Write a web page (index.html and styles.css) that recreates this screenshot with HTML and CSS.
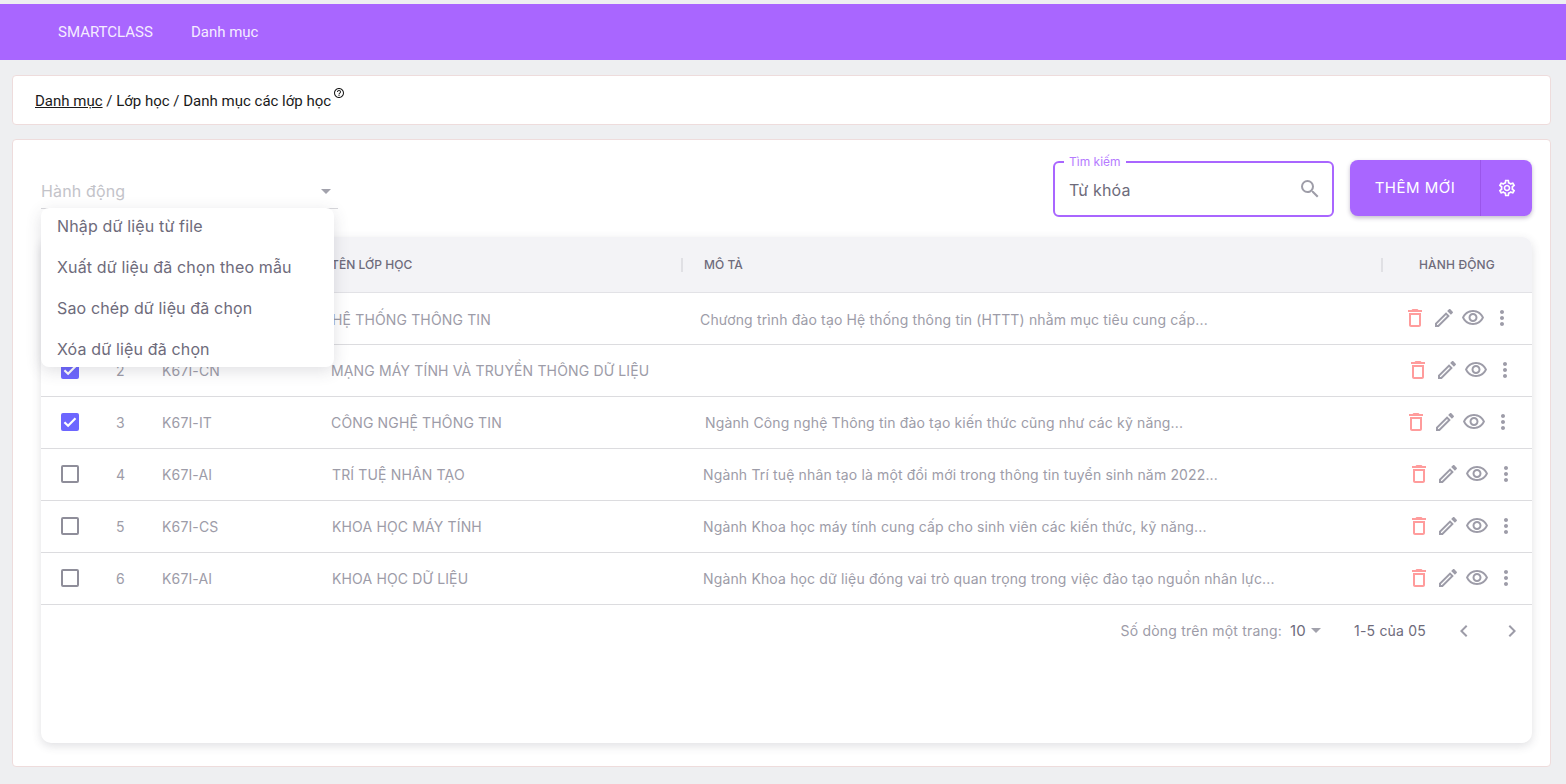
FILE: index.html
```html
<!DOCTYPE html>
<html lang="vi">
<head>
<meta charset="UTF-8" />
<meta name="viewport" content="width=device-width, initial-scale=1" />
<title>Danh mục các lớp học</title>
<link rel="stylesheet" href="styles.css">
</head>
<body>

<svg class="defs" width="0" height="0">
  <symbol id="i-search" viewBox="0 0 24 24"><path d="M15.5 14h-.79l-.28-.27A6.471 6.471 0 0 0 16 9.5 6.5 6.5 0 1 0 9.5 16c1.61 0 3.09-.59 4.23-1.57l.27.28v.79l5 4.99L20.49 19l-4.99-5zm-6 0C7.01 14 5 11.99 5 9.5S7.01 5 9.5 5 14 7.01 14 9.5 11.99 14 9.5 14z"/></symbol>
  <symbol id="i-trash" viewBox="0 0 24 24"><path d="M16 9v10H8V9h8m-1.5-6h-5l-1 1H5v2h14V4h-3.5l-1-1zM18 7H6v12c0 1.1.9 2 2 2h8c1.1 0 2-.9 2-2V7z"/></symbol>
  <symbol id="i-edit" viewBox="0 0 24 24"><path d="M14.06 9.02l.92.92L5.92 19H5v-.92l9.06-9.06M17.66 3c-.25 0-.51.1-.7.29l-1.83 1.83 3.75 3.75 1.83-1.83c.39-.39.39-1.02 0-1.41l-2.34-2.34c-.2-.2-.45-.29-.71-.29zm-3.6 3.19L3 17.25V21h3.75L17.81 9.94l-3.75-3.75z"/></symbol>
  <symbol id="i-eye" viewBox="0 0 24 24"><path d="M12 6c3.79 0 7.17 2.13 8.82 5.5C19.17 14.87 15.79 17 12 17s-7.17-2.13-8.82-5.5C4.83 8.13 8.21 6 12 6m0-2C7 4 2.73 7.11 1 11.5 2.73 15.89 7 19 12 19s9.27-3.11 11-7.5C21.27 7.11 17 4 12 4zm0 5c1.38 0 2.5 1.12 2.5 2.5S13.38 14 12 14s-2.5-1.12-2.5-2.5S10.62 9 12 9m0-2c-2.48 0-4.5 2.02-4.5 4.5S9.52 16 12 16s4.5-2.02 4.5-4.5S14.48 7 12 7z"/></symbol>
  <symbol id="i-more" viewBox="0 0 24 24"><path d="M12 8c1.1 0 2-.9 2-2s-.9-2-2-2-2 .9-2 2 .9 2 2 2zm0 2c-1.1 0-2 .9-2 2s.9 2 2 2 2-.9 2-2-.9-2-2-2zm0 6c-1.1 0-2 .9-2 2s.9 2 2 2 2-.9 2-2-.9-2-2-2z"/></symbol>
  <symbol id="i-check" viewBox="0 0 18 18"><path d="M3.4 9.2l3.7 3.5 7.4-7.4" fill="none" stroke="#fff" stroke-width="2.2"/></symbol>
</svg>

<header class="topbar">
  <a class="topbar-link" href="#">SMARTCLASS</a>
  <a class="topbar-link" href="#">Danh mục</a>
</header>

<section class="breadcrumb">
  <a href="#">Danh mục</a>&nbsp;/ Lớp học / Danh mục các lớp học
  <svg class="help" viewBox="0 0 24 24"><path d="M11 18h2v-2h-2v2zm1-16C6.48 2 2 6.48 2 12s4.48 10 10 10 10-4.48 10-10S17.52 2 12 2zm0 18c-4.41 0-8-3.59-8-8s3.59-8 8-8 8 3.59 8 8-3.59 8-8 8zm0-14c-2.21 0-4 1.79-4 4h2c0-1.1.9-2 2-2s2 .9 2 2c0 2-3 1.75-3 5h2c0-2.25 3-2.5 3-5 0-2.21-1.79-4-4-4z"/></svg>
</section>

<main class="panel">
  <div class="toolbar">
    <div class="action-select">
      <span>Hành động</span>
      <i class="caret"></i>
    </div>

    <div class="search">
      <span class="search-label">Tìm kiếm</span>
      <span class="search-text">Từ khóa</span>
      <svg class="search-icon"><use href="#i-search"/></svg>
    </div>

    <div class="add-btn">
      <span class="add-btn-text">THÊM MỚI</span>
      <span class="add-btn-gear">
        <svg viewBox="0 0 24 24"><path d="M19.43 12.98c.04-.32.07-.64.07-.98 0-.34-.03-.66-.07-.98l2.11-1.65c.19-.15.24-.42.12-.64l-2-3.46a.5.5 0 0 0-.61-.22l-2.49 1c-.52-.4-1.08-.73-1.69-.98l-.38-2.65A.488.488 0 0 0 14 2h-4c-.25 0-.46.18-.49.42l-.38 2.65c-.61.25-1.17.59-1.69.98l-2.49-1a.566.566 0 0 0-.18-.03c-.17 0-.34.09-.43.25l-2 3.46c-.13.22-.07.49.12.64l2.11 1.65c-.04.32-.07.65-.07.98 0 .33.03.66.07.98l-2.11 1.65c-.19.15-.24.42-.12.64l2 3.46a.5.5 0 0 0 .61.22l2.49-1c.52.4 1.08.73 1.69.98l.38 2.65c.03.24.24.42.49.42h4c.25 0 .46-.18.49-.42l.38-2.65c.61-.25 1.17-.59 1.69-.98l2.49 1c.06.02.12.03.18.03.17 0 .34-.09.43-.25l2-3.46c.12-.22.07-.49-.12-.64l-2.11-1.65zM17.45 11.27c.04.31.05.52.05.73 0 .21-.02.43-.05.73l-.14 1.13.89.7 1.08.84-.7 1.21-1.27-.51-1.04-.42-.9.68c-.43.32-.84.56-1.25.73l-1.06.43-.16 1.13-.2 1.35h-1.4l-.19-1.35-.16-1.13-1.06-.43c-.43-.18-.83-.41-1.23-.71l-.91-.7-1.06.43-1.27.51-.7-1.21 1.08-.84.89-.7-.14-1.13c-.03-.31-.05-.54-.05-.74s.02-.43.05-.73l.14-1.13-.89-.7-1.08-.84.7-1.21 1.27.51 1.04.42.9-.68c.43-.32.84-.56 1.25-.73l1.06-.43.16-1.13.2-1.35h1.39l.19 1.35.16 1.13 1.06.43c.43.18.83.41 1.23.71l.91.7 1.06-.43 1.27-.51.7 1.21-1.07.85-.89.7.14 1.13zM12 8c-2.21 0-4 1.79-4 4s1.79 4 4 4 4-1.79 4-4-1.79-4-4-4zm0 6c-1.1 0-2-.9-2-2s.9-2 2-2 2 .9 2 2-.9 2-2 2z"/></svg>
      </span>
    </div>

    <ul class="menu">
      <li>Nhập dữ liệu từ file</li>
      <li>Xuất dữ liệu đã chọn theo mẫu</li>
      <li>Sao chép dữ liệu đã chọn</li>
      <li>Xóa dữ liệu đã chọn</li>
    </ul>
  </div>

  <div class="table-card">
    <div class="thead">
      <span></span>
      <span class="th">Tên lớp học</span>
      <span class="th th-sep">Mô tả</span>
      <span class="th th-sep th-actions">Hành động</span>
    </div>

    <div class="row row-a">
      <span></span>
      <span></span>
      <span></span>
      <span class="name">HỆ THỐNG THÔNG TIN</span>
      <span class="desc">Chương trình đào tạo Hệ thống thông tin (HTTT) nhằm mục tiêu cung cấp...</span>
      <span class="actions">
        <svg class="ic-trash"><use href="#i-trash"/></svg>
        <svg><use href="#i-edit"/></svg>
        <svg><use href="#i-eye"/></svg>
        <svg><use href="#i-more"/></svg>
      </span>
    </div>

    <div class="row row-b">
      <span class="check checked"><svg><use href="#i-check"/></svg></span>
      <span class="num">2</span>
      <span class="code">K67I-CN</span>
      <span class="name">MẠNG MÁY TÍNH VÀ TRUYỀN THÔNG DỮ LIỆU</span>
      <span class="desc"></span>
      <span class="actions">
        <svg class="ic-trash"><use href="#i-trash"/></svg>
        <svg><use href="#i-edit"/></svg>
        <svg><use href="#i-eye"/></svg>
        <svg><use href="#i-more"/></svg>
      </span>
    </div>

    <div class="row row-c">
      <span class="check checked"><svg><use href="#i-check"/></svg></span>
      <span class="num">3</span>
      <span class="code">K67I-IT</span>
      <span class="name">CÔNG NGHỆ THÔNG TIN</span>
      <span class="desc">Ngành Công nghệ Thông tin đào tạo kiến thức cũng như các kỹ năng...</span>
      <span class="actions">
        <svg class="ic-trash"><use href="#i-trash"/></svg>
        <svg><use href="#i-edit"/></svg>
        <svg><use href="#i-eye"/></svg>
        <svg><use href="#i-more"/></svg>
      </span>
    </div>

    <div class="row row-d">
      <span class="check"></span>
      <span class="num">4</span>
      <span class="code">K67I-AI</span>
      <span class="name">TRÍ TUỆ NHÂN TẠO</span>
      <span class="desc">Ngành Trí tuệ nhân tạo là một đổi mới trong thông tin tuyển sinh năm 2022...</span>
      <span class="actions">
        <svg class="ic-trash"><use href="#i-trash"/></svg>
        <svg><use href="#i-edit"/></svg>
        <svg><use href="#i-eye"/></svg>
        <svg><use href="#i-more"/></svg>
      </span>
    </div>

    <div class="row row-d">
      <span class="check"></span>
      <span class="num">5</span>
      <span class="code">K67I-CS</span>
      <span class="name">KHOA HỌC MÁY TÍNH</span>
      <span class="desc">Ngành Khoa học máy tính cung cấp cho sinh viên các kiến thức, kỹ năng...</span>
      <span class="actions">
        <svg class="ic-trash"><use href="#i-trash"/></svg>
        <svg><use href="#i-edit"/></svg>
        <svg><use href="#i-eye"/></svg>
        <svg><use href="#i-more"/></svg>
      </span>
    </div>

    <div class="row row-d">
      <span class="check"></span>
      <span class="num">6</span>
      <span class="code">K67I-AI</span>
      <span class="name">KHOA HỌC DỮ LIỆU</span>
      <span class="desc">Ngành Khoa học dữ liệu đóng vai trò quan trọng trong việc đào tạo nguồn nhân lực...</span>
      <span class="actions">
        <svg class="ic-trash"><use href="#i-trash"/></svg>
        <svg><use href="#i-edit"/></svg>
        <svg><use href="#i-eye"/></svg>
        <svg><use href="#i-more"/></svg>
      </span>
    </div>

    <div class="pager">
      <span class="pager-label">Số dòng trên một trang:</span>
      <span class="pager-size">10</span>
      <i class="caret"></i>
      <span class="pager-range">1-5 của 05</span>
      <svg class="pager-arrow" viewBox="0 0 24 24"><path d="M15.41 7.41L14 6l-6 6 6 6 1.41-1.41L10.83 12z"/></svg>
      <svg class="pager-arrow" viewBox="0 0 24 24"><path d="M10 6L8.59 7.41 13.17 12l-4.58 4.59L10 18l6-6z"/></svg>
    </div>
  </div>
</main>

</body>
</html>
```

FILE: styles.css
```css
* {
  box-sizing: border-box;
}
body {
  margin: 0;
  padding-top: 4px;
  height: 784px;
  overflow: hidden;
  background: #eeeff1;
  font-family: 'Inter', 'Noto Sans', sans-serif;
  color: #6e6b7b;
}
.defs {
  position: absolute;
}

/* top bar */
.topbar {
  height: 56px;
  background: #a966ff;
  display: flex;
  align-items: center;
  gap: 38px;
  padding-left: 58px;
}
.topbar-link {
  font-family: 'Roboto', sans-serif;
  font-size: 15px;
  color: #f5ecff;
  text-decoration: none;
}

/* breadcrumb */
.breadcrumb {
  margin: 15px 15px 14px 12px;
  height: 50px;
  padding: 15px 22px;
  background: #fff;
  border: 1px solid #eedcdc;
  border-radius: 4px;
  font-family: 'Roboto', sans-serif;
  font-size: 15px;
  line-height: 20px;
  color: #1a1a1a;
  display: flex;
  align-items: flex-start;
}
.breadcrumb a {
  color: #1a1a1a;
}
.help {
  width: 12px;
  height: 12px;
  margin: -4px 0 0 2px;
  fill: #1a1a1a;
}

/* main panel */
.panel {
  margin: 0 15px 0 12px;
  height: 628px;
  padding: 20px 18px 23px 28px;
  background: #fff;
  border: 1px solid #eedcdc;
  border-radius: 4px;
  display: flex;
  flex-direction: column;
}
.toolbar {
  position: relative;
  height: 77px;
  flex: none;
  display: flex;
  align-items: flex-start;
}
.action-select {
  width: 297px;
  height: 49px;
  margin-right: 715px;
  padding-top: 21px;
  border-bottom: 1px solid #d8d8dc;
  display: flex;
  justify-content: space-between;
  font-size: 16px;
  line-height: 20px;
  letter-spacing: 0.15px;
  color: #c3c3c9;
}
.action-select .caret {
  margin: 8px 7px 0 0;
}
.caret {
  width: 0;
  height: 0;
  border-left: 5px solid transparent;
  border-right: 5px solid transparent;
  border-top: 5px solid #a2a2ac;
}

/* search field */
.search {
  position: relative;
  width: 281px;
  height: 56px;
  margin-top: 1px;
  margin-right: 16px;
  padding: 0 13px 0 14px;
  border: 2px solid #a966ff;
  border-radius: 6px;
  display: flex;
  align-items: center;
  justify-content: space-between;
}
.search-label {
  position: absolute;
  left: 9px;
  top: -9px;
  padding: 0 5px;
  background: #fff;
  font-size: 12px;
  line-height: 15px;
  color: #b57bff;
}
.search-text {
  padding-top: 2px;
  font-size: 16px;
  letter-spacing: 0.15px;
  color: #6e6b7b;
}
.search-icon {
  width: 24px;
  height: 24px;
  margin-right: -3px;
  fill: #9e9da8;
}

/* add button */
.add-btn {
  width: 182px;
  height: 56px;
  background: #a966ff;
  border-radius: 8px;
  box-shadow: 0 2px 4px rgba(60, 40, 90, 0.3);
  display: flex;
  color: #fff;
}
.add-btn-text {
  width: 131px;
  padding-right: 0;
  border-right: 1px solid #9a55ea;
  font-size: 15px;
  line-height: 56px;
  letter-spacing: 0.5px;
  text-align: center;
}
.add-btn-gear {
  flex: 1;
  display: flex;
  align-items: center;
  justify-content: center;
}
.add-btn-gear svg {
  width: 20px;
  height: 20px;
  fill: #fff;
}

/* dropdown */
.menu {
  position: absolute;
  z-index: 5;
  left: 0;
  top: 48px;
  width: 293px;
  height: 159px;
  margin: 0;
  padding: 0;
  list-style: none;
  background: #fff;
  border-radius: 8px;
  box-shadow: 0 4px 16px rgba(60, 60, 80, 0.16);
}
.menu li {
  height: 41px;
  padding: 8px 16px 0;
  font-size: 16px;
  line-height: 20px;
  letter-spacing: 0.15px;
  color: #6e6b7b;
}

/* table */
.table-card {
  flex: 1;
  background: #fff;
  border-radius: 10px;
  box-shadow: 0 3px 10px rgba(60, 60, 80, 0.16);
  overflow: hidden;
}
.thead {
  height: 56px;
  background: #f3f3f6;
  border-bottom: 1px solid #e2e2e6;
  display: grid;
  grid-template-columns: 290px 350px 700px 1fr;
  align-items: center;
}
.th {
  font-size: 12px;
  font-weight: 500;
  line-height: 14px;
  letter-spacing: 0.05px;
  text-transform: uppercase;
  color: #6e6b7b;
}
.th-sep {
  border-left: 2px solid #e0e0e4;
  padding-left: 21px;
}
.th-actions {
  padding-left: 36px;
  letter-spacing: 0.15px;
}
.row {
  height: 52px;
  border-bottom: 1px solid #dcdcdf;
  display: grid;
  grid-template-columns: 75px 46px 169px 369px 705px 1fr;
  align-items: center;
  font-size: 14px;
  letter-spacing: 0.15px;
  color: #9d9ca8;
}
.check {
  width: 18px;
  height: 18px;
  margin: 0 0 2px 20px;
  border: 2px solid #8f8e9a;
  border-radius: 2px;
}
.check.checked {
  background: #6d66ff;
  border: none;
}
.check svg {
  display: block;
  width: 18px;
  height: 18px;
}
.desc {
  white-space: nowrap;
}
.row-a .name {
  padding-left: 1px;
}
.row-a .name,
.row-a .desc {
  padding-top: 1px;
}
.row-a .actions {
  margin-left: -2px;
}
.row-b .actions {
  margin-left: 1px;
}
.row-c .desc {
  padding-left: 5px;
}
.row-c .actions {
  margin-left: -1px;
}
.row-d .name {
  padding-left: 1px;
}
.row-d .desc {
  padding-left: 3px;
}
.row-d .actions {
  margin-left: 2px;
}
.actions {
  display: flex;
  gap: 5px;
  margin-bottom: 2px;
}
.actions svg {
  width: 24px;
  height: 24px;
  fill: #9d9ca8;
}
.actions .ic-trash {
  fill: #ff9c9c;
}

/* pagination */
.pager {
  height: 51px;
  padding-right: 8px;
  display: flex;
  align-items: center;
  justify-content: flex-end;
  font-size: 14px;
  letter-spacing: 0.2px;
  color: #9d9ca8;
}
.pager-size {
  margin-left: 8px;
  margin-right: 5px;
  font-size: 15px;
  color: #6e6b7b;
}
.pager .caret {
  margin-right: 33px;
}
.pager-range {
  margin-right: 26px;
  color: #6e6b7b;
}
.pager-arrow {
  width: 24px;
  height: 24px;
  fill: #9d9ca8;
}
.pager-arrow + .pager-arrow {
  margin-left: 24px;
}
```
